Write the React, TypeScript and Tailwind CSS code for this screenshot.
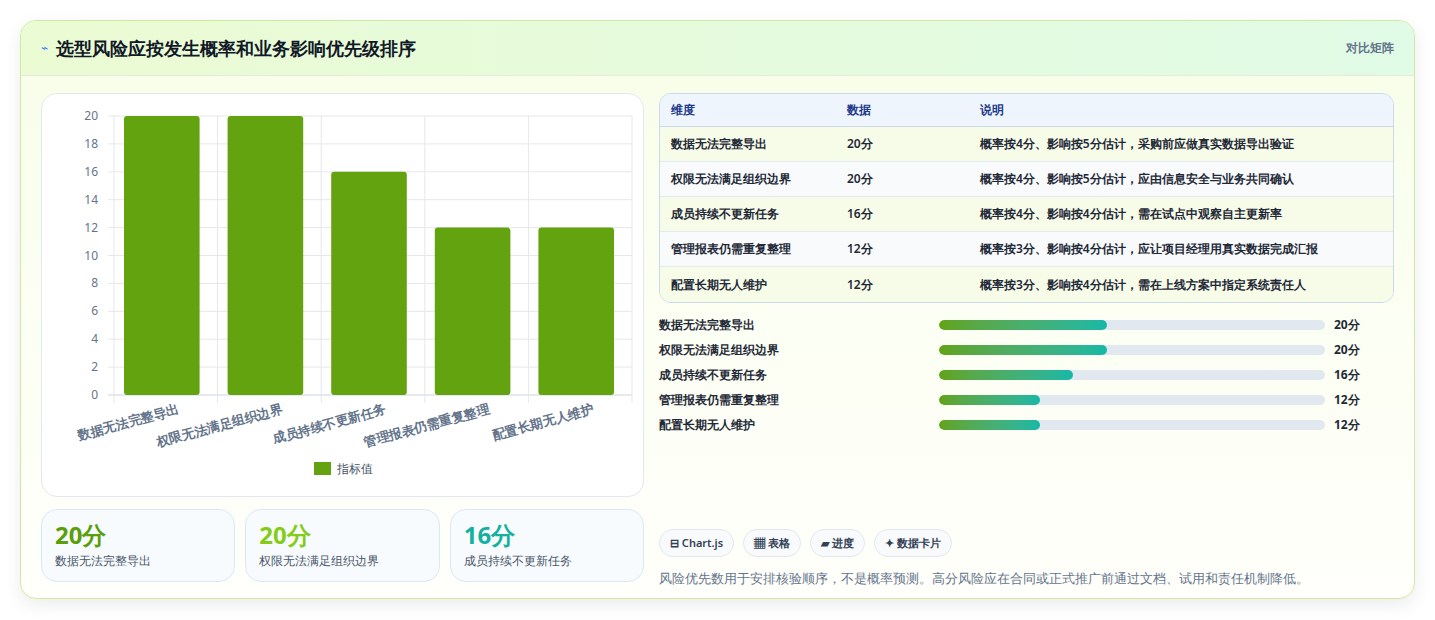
const rows = [
  { name: "数据无法完整导出", v: 20, note: "概率按4分、影响按5分估计，采购前应做真实数据导出验证" },
  { name: "权限无法满足组织边界", v: 20, note: "概率按4分、影响按5分估计，应由信息安全与业务共同确认" },
  { name: "成员持续不更新任务", v: 16, note: "概率按4分、影响按4分估计，需在试点中观察自主更新率" },
  { name: "管理报表仍需重复整理", v: 12, note: "概率按3分、影响按4分估计，应让项目经理用真实数据完成汇报" },
  { name: "配置长期无人维护", v: 12, note: "概率按3分、影响按4分估计，需在上线方案中指定系统责任人" },
];

function Chart() {
  const x0 = 72, x1 = 590, yTop = 22, yBot = 301;
  const step = (x1 - x0) / 5;
  const ticks = [0, 2, 4, 6, 8, 10, 12, 14, 16, 18, 20];
  const y = (v: number) => yBot - (v / 20) * (yBot - yTop);
  return (
    <svg width="600" height="400" className="block">
      {ticks.map((t) => (
        <g key={t}>
          <line x1={x0 - 6} x2={x1} y1={y(t)} y2={y(t)} stroke={t === 0 ? "#cbd5e1" : "#e5e7eb"} />
          <text x={x0 - 16} y={y(t) + 4} textAnchor="end" fontSize="12" fill="#64748b">{t}</text>
        </g>
      ))}
      {[0, 1, 2, 3, 4, 5].map((i) => (
        <line key={i} x1={x0 + i * step} x2={x0 + i * step} y1={yTop} y2={yBot + 8} stroke="#e5e7eb" />
      ))}
      {rows.map((r, i) => (
        <g key={r.name}>
          <rect x={x0 + i * step + 10} y={y(r.v)} width={step - 28} height={yBot - y(r.v)} rx="3" fill="#62a30f" />
          <text
            transform={`translate(${x0 + i * step + step / 2 + 14},${yBot + 18}) rotate(-15)`}
            textAnchor="end"
            fontSize="13"
            fontWeight="600"
            fill="#64748b"
          >
            {r.name}
          </text>
        </g>
      ))}
      <rect x="272" y="368" width="17" height="13" fill="#62a30f" />
      <text x="295" y="379" fontSize="12" fill="#475569">指标值</text>
    </svg>
  );
}

export default function App() {
  return (
    <div className="w-[1435px] h-[620px] bg-white p-5 font-['Noto_Sans_CJK_SC','Noto_Sans',sans-serif]">
      <div className="h-[579px] rounded-2xl border border-[#cfe9a0] bg-gradient-to-b from-[#f8fee9] to-[#fffffb] shadow-[0_6px_18px_rgba(0,0,0,0.08)] overflow-hidden">
        <div className="h-[55px] flex items-center justify-between px-5 bg-gradient-to-r from-[#ebfbd3] to-[#e0fbe6] border-b border-[#e2ecd8]">
          <div className="flex items-center gap-2">
            <span className="text-[#3b82f6] text-xs">⌁</span>
            <h1 className="text-[18px] font-bold text-[#111827]">选型风险应按发生概率和业务影响优先级排序</h1>
          </div>
          <span className="text-xs font-semibold text-[#64748b]">对比矩阵</span>
        </div>
        <div className="flex gap-[15px] px-5 pt-[17px]">
          <div className="w-[603px] flex flex-col gap-3">
            <div className="h-[404px] rounded-2xl border border-[#e2e8f0] bg-white overflow-hidden">
              <Chart />
            </div>
            <div className="grid grid-cols-3 gap-[10px]">
              {[
                { v: "20分", c: "text-[#5b9e0c]", n: "数据无法完整导出" },
                { v: "20分", c: "text-[#84cc16]", n: "权限无法满足组织边界" },
                { v: "16分", c: "text-[#14b0a0]", n: "成员持续不更新任务" },
              ].map((s) => (
                <div key={s.n} className="h-[73px] rounded-2xl border border-[#dbe7f5] bg-[#f8fbfe] px-[13px] pt-[9px]">
                  <div className={`text-[24px] font-bold leading-8 ${s.c}`}>{s.v}</div>
                  <div className="text-xs text-[#475569] mt-0.5">{s.n}</div>
                </div>
              ))}
            </div>
          </div>
          <div className="flex-1 flex flex-col">
            <div className="rounded-xl border border-[#cbd9e8] overflow-hidden text-xs">
              <div className="h-[33px] flex items-center bg-[#eef5fd] border-b border-[#cbd9e8] font-bold text-[#1e3a8a]">
                <div className="w-[187px] pl-[11px]">维度</div>
                <div className="w-[133px]">数据</div>
                <div>说明</div>
              </div>
              {rows.map((r, i) => (
                <div key={r.name} className={`h-[35px] flex items-center font-semibold text-[#1f2937] ${i < 4 ? "border-b border-[#e2e8f0]" : ""} ${i % 2 === 0 ? "bg-[#f7fce9]" : "bg-[#f8fafc]"}`}>
                  <div className="w-[187px] pl-[11px]">{r.name}</div>
                  <div className="w-[133px]">{r.v}分</div>
                  <div>{r.note}</div>
                </div>
              ))}
            </div>
            <div className="flex flex-col gap-[7px] mt-[13px]">
              {rows.map((r) => (
                <div key={r.name} className="h-[18px] flex items-center text-xs font-semibold text-[#1f2937]">
                  <div className="w-[280px]">{r.name}</div>
                  <div className="w-[386px] h-[10px] rounded-full bg-[#e2e8f0] overflow-hidden">
                    <div className="h-full rounded-full bg-gradient-to-r from-[#62a30f] to-[#14b8a6]" style={{ width: `${(r.v / 46) * 100}%` }} />
                  </div>
                  <div className="ml-[9px] font-bold">{r.v}分</div>
                </div>
              ))}
            </div>
            <div className="flex gap-[9px] mt-[95px] text-[11px] font-semibold text-[#334155]">
              {["⊟ Chart.js", "▦ 表格", "▰ 进度", "✦ 数据卡片"].map((c) => (
                <span key={c} className="h-[28px] px-[10px] flex items-center rounded-full border border-[#e2e8f0] bg-[#f8fafc]">{c}</span>
              ))}
            </div>
            <p className="mt-[12px] text-[13px] text-[#64748b]">风险优先数用于安排核验顺序，不是概率预测。高分风险应在合同或正式推广前通过文档、试用和责任机制降低。</p>
          </div>
        </div>
      </div>
    </div>
  );
}
